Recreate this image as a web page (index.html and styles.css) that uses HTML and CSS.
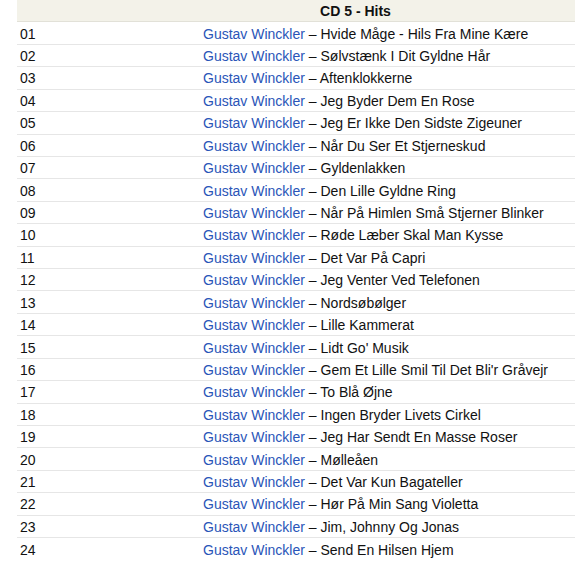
FILE: index.html
```html
<!DOCTYPE html>
<html lang="da">
<head>
<meta charset="utf-8">
<title>CD 5 - Hits</title>
<link rel="stylesheet" href="styles.css">
</head>
<body>
<div class="page">
  <div class="tracklist">
    <div class="row head">
      <div class="title">CD 5 - Hits</div>
    </div>
    <div class="row"><span class="num">01</span><span class="track"><a class="artist">Gustav Winckler</a> – Hvide Måge - Hils Fra Mine Kære</span></div>
    <div class="row"><span class="num">02</span><span class="track"><a class="artist">Gustav Winckler</a> – Sølvstænk I Dit Gyldne Hår</span></div>
    <div class="row"><span class="num">03</span><span class="track"><a class="artist">Gustav Winckler</a> – Aftenklokkerne</span></div>
    <div class="row"><span class="num">04</span><span class="track"><a class="artist">Gustav Winckler</a> – Jeg Byder Dem En Rose</span></div>
    <div class="row"><span class="num">05</span><span class="track"><a class="artist">Gustav Winckler</a> – Jeg Er Ikke Den Sidste Zigeuner</span></div>
    <div class="row"><span class="num">06</span><span class="track"><a class="artist">Gustav Winckler</a> – Når Du Ser Et Stjerneskud</span></div>
    <div class="row"><span class="num">07</span><span class="track"><a class="artist">Gustav Winckler</a> – Gyldenlakken</span></div>
    <div class="row"><span class="num">08</span><span class="track"><a class="artist">Gustav Winckler</a> – Den Lille Gyldne Ring</span></div>
    <div class="row"><span class="num">09</span><span class="track"><a class="artist">Gustav Winckler</a> – Når På Himlen Små Stjerner Blinker</span></div>
    <div class="row"><span class="num">10</span><span class="track"><a class="artist">Gustav Winckler</a> – Røde Læber Skal Man Kysse</span></div>
    <div class="row"><span class="num">11</span><span class="track"><a class="artist">Gustav Winckler</a> – Det Var På Capri</span></div>
    <div class="row"><span class="num">12</span><span class="track"><a class="artist">Gustav Winckler</a> – Jeg Venter Ved Telefonen</span></div>
    <div class="row"><span class="num">13</span><span class="track"><a class="artist">Gustav Winckler</a> – Nordsøbølger</span></div>
    <div class="row"><span class="num">14</span><span class="track"><a class="artist">Gustav Winckler</a> – Lille Kammerat</span></div>
    <div class="row"><span class="num">15</span><span class="track"><a class="artist">Gustav Winckler</a> – Lidt Go' Musik</span></div>
    <div class="row"><span class="num">16</span><span class="track"><a class="artist">Gustav Winckler</a> – Gem Et Lille Smil Til Det Bli'r Gråvejr</span></div>
    <div class="row"><span class="num">17</span><span class="track"><a class="artist">Gustav Winckler</a> – To Blå Øjne</span></div>
    <div class="row"><span class="num">18</span><span class="track"><a class="artist">Gustav Winckler</a> – Ingen Bryder Livets Cirkel</span></div>
    <div class="row"><span class="num">19</span><span class="track"><a class="artist">Gustav Winckler</a> – Jeg Har Sendt En Masse Roser</span></div>
    <div class="row"><span class="num">20</span><span class="track"><a class="artist">Gustav Winckler</a> – Mølleåen</span></div>
    <div class="row"><span class="num">21</span><span class="track"><a class="artist">Gustav Winckler</a> – Det Var Kun Bagateller</span></div>
    <div class="row"><span class="num">22</span><span class="track"><a class="artist">Gustav Winckler</a> – Hør På Min Sang Violetta</span></div>
    <div class="row"><span class="num">23</span><span class="track"><a class="artist">Gustav Winckler</a> – Jim, Johnny Og Jonas</span></div>
    <div class="row last"><span class="num">24</span><span class="track"><a class="artist">Gustav Winckler</a> – Send En Hilsen Hjem</span></div>
  </div>
</div>
</body>
</html>
```

FILE: styles.css
```css
html, body {
  margin: 0;
  padding: 0;
  background: #ffffff;
}

.page {
  width: 575px;
  overflow: hidden;
  padding-left: 17px;
  box-sizing: border-box;
}

.tracklist {
  width: 677px;
  font-family: "Liberation Sans", Arial, Helvetica, sans-serif;
  font-size: 14px;
  color: #111111;
}

.row {
  display: flex;
  align-items: center;
  height: 22.43px;
  box-sizing: border-box;
  padding-top: 2px;
  border-bottom: 1px solid #e6e6e6;
  line-height: 17px;
}

.row.last {
  border-bottom: none;
}

.row.head {
  background: #f3f2e9;
  border-bottom: 1px solid #e2e1d8;
  justify-content: center;
}

.title {
  font-weight: bold;
  color: #111111;
}

.num {
  width: 183px;
  flex: none;
  padding-left: 3px;
  box-sizing: border-box;
}

.track {
  padding-left: 3px;
  white-space: nowrap;
}

.artist {
  color: #2a55b8;
  text-decoration: none;
}
```
